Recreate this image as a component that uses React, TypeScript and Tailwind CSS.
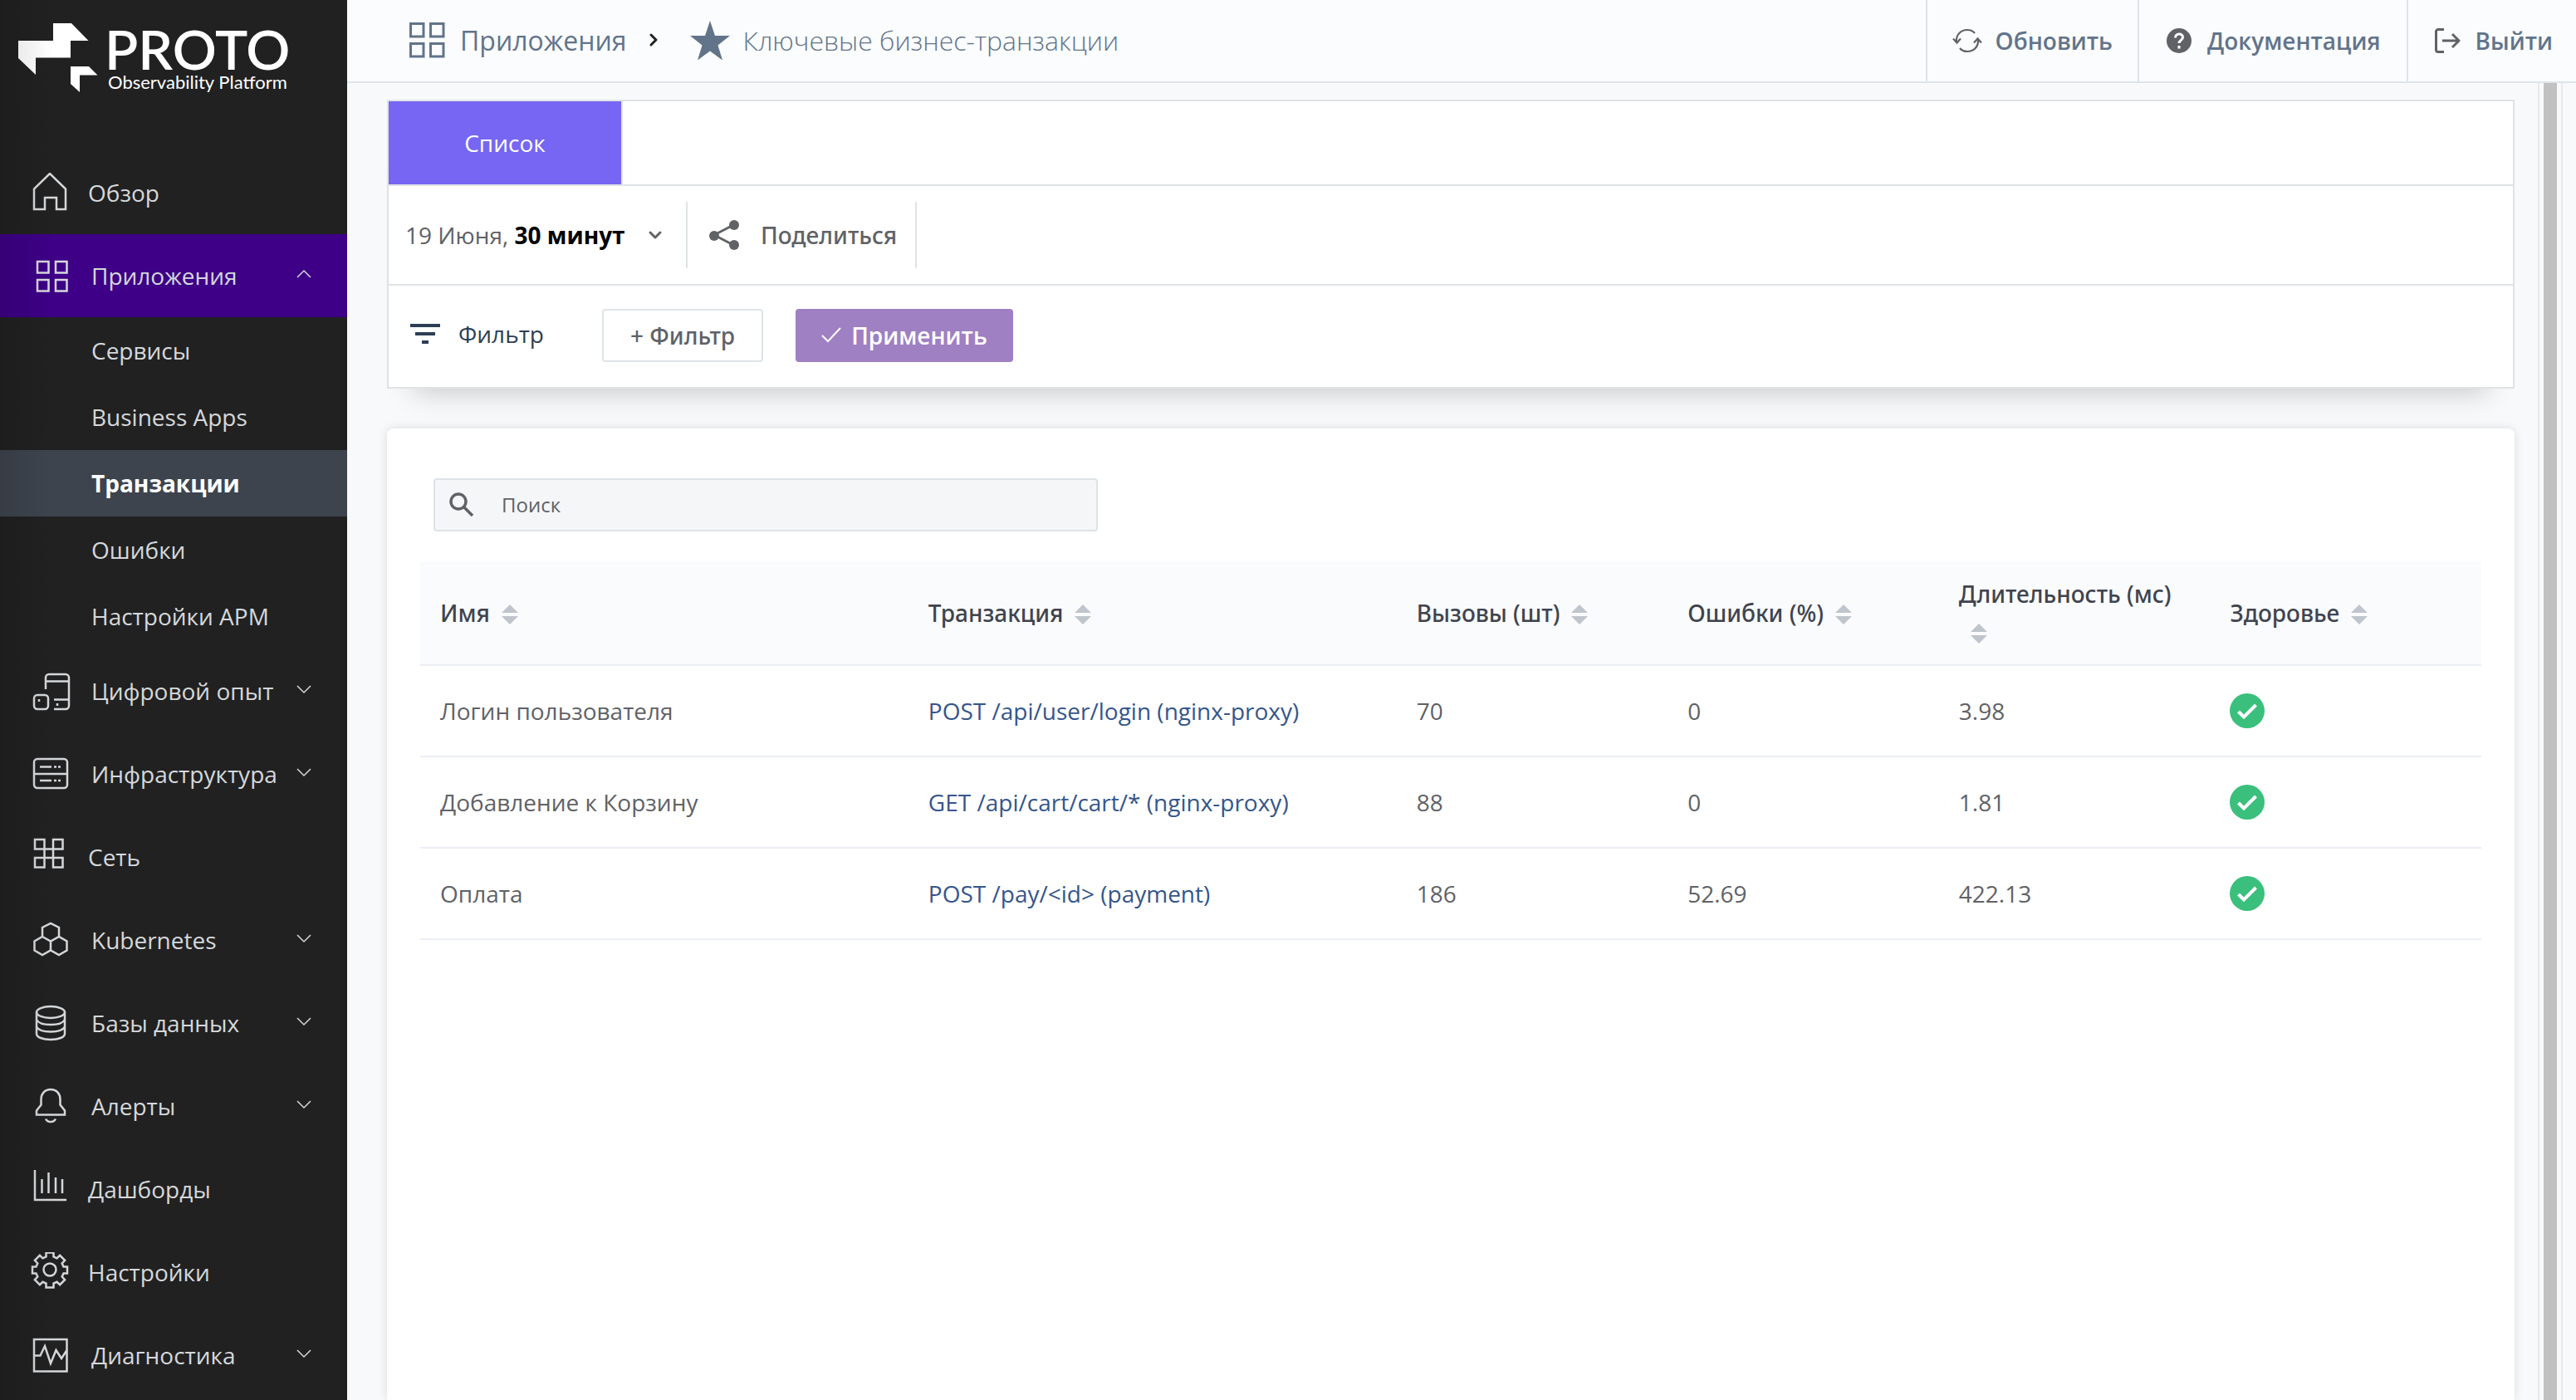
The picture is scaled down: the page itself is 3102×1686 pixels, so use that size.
import type { ReactNode } from 'react';

type NavItem = {
  label: string;
  icon: ReactNode;
  expandable?: boolean;
  open?: boolean;
  children?: string[];
};

const navItems: NavItem[] = [
  {
    label: 'Обзор',
    icon: <path d="M4 44V19.5L23 1l19 18.5V44H31V30H17v14z" />,
  },
  {
    label: 'Приложения',
    expandable: true,
    open: true,
    icon: (
      <path d="M8 7h13.5v13.5H8zM30 7h13.5v13.5H30zM8 29h13.5v13.5H8zM30 29h13.5v13.5H30z" />
    ),
    children: [
      'Сервисы',
      'Business Apps',
      'Транзакции',
      'Ошибки',
      'Настройки АРМ',
    ],
  },
  {
    label: 'Цифровой опыт',
    expandable: true,
    icon: (
      <>
        <path d="M18 22V8a4 4 0 0 1 4-4h20a4 4 0 0 1 4 4v34a4 4 0 0 1-4 4H28M18 12.5h28M28 34.5h18" />
        <rect x="4" y="29" width="17" height="17" rx="4" />
        <path d="M10 34v3M32 39v3" />
      </>
    ),
  },
  {
    label: 'Инфраструктура',
    expandable: true,
    icon: (
      <>
        <rect x="4" y="6" width="40" height="35" rx="4" />
        <path d="M4 24h40M11 15.5h14M28 15.5h3M33 15.5h3M11 32h14M28 32h3M33 32h3" />
      </>
    ),
  },
  {
    label: 'Сеть',
    icon: (
      <path d="M5 3h11.5v11.5H5zM27 3h11.5v11.5H27zM5 25h11.5v11.5H5zM27 25h11.5v11.5H27zM16.5 14.5H27V25H16.5z" />
    ),
  },
  {
    label: 'Kubernetes',
    expandable: true,
    icon: (
      <path d="M14 20V9l10-5 10 5v11M14 20l10 5.5L34 20l9.5 5.5v11L34 42l-10-5.5L14 42l-9.5-5.5v-11zM24 25.5v11" />
    ),
  },
  {
    label: 'Базы данных',
    expandable: true,
    icon: (
      <>
        <ellipse cx="24" cy="11" rx="17" ry="7" />
        <path d="M7 11v26c0 4 7.5 7 17 7s17-3 17-7V11M7 20c2 4 9 6 17 6s15-2 17-6M7 28.5c2 4 9 6 17 6s15-2 17-6" />
      </>
    ),
  },
  {
    label: 'Алерты',
    expandable: true,
    icon: (
      <path d="M7 34.5v-5l5.5-7V16c0-7 4.5-12 11.5-12s11.5 5 11.5 12v6.5l5.5 7v5zM18 39.5c1 2 3 3.5 6 3.5s5-1.5 6-3.5" />
    ),
  },
  {
    label: 'Дашборды',
    icon: <path d="M5 1v36h38M13.5 12v17M21.5 4v25M30 10v19M38 12v17" />,
  },
  {
    label: 'Настройки',
    icon: (
      <>
        <circle cx="23" cy="21" r="7.5" />
        <path d="M18.5 0.5h9v5l4 1.8 3.6-3.5 6 6-3.4 3.7 1.8 4h4.5v8h-4.5l-1.8 4 3.4 3.7-6 6-3.6-3.4-4 1.7v5h-9v-5l-4-1.7-3.6 3.4-6-6 3.4-3.7-1.8-4H2v-8h4.5l1.8-4-3.4-3.7 6-6 3.6 3.5 4-1.8z" />
      </>
    ),
  },
  {
    label: 'Диагностика',
    expandable: true,
    icon: (
      <path d="M4 5h39.5v38.5H4zM4 24.5h7.5L17 13l7 21 6.5-16 6.5 10 6.5-10" />
    ),
  },
];

const columns = [
  'Имя',
  'Транзакция',
  'Вызовы (шт)',
  'Ошибки (%)',
  'Длительность (мс)',
  'Здоровье',
];

const rows = [
  {
    name: 'Логин пользователя',
    transaction: 'POST /api/user/login (nginx-proxy)',
    calls: '70',
    errors: '0',
    duration: '3.98',
  },
  {
    name: 'Добавление к Корзину',
    transaction: 'GET /api/cart/cart/* (nginx-proxy)',
    calls: '88',
    errors: '0',
    duration: '1.81',
  },
  {
    name: 'Оплата',
    transaction: 'POST /pay/<id> (payment)',
    calls: '186',
    errors: '52.69',
    duration: '422.13',
  },
];

function Logo() {
  return (
    <a href="#" className="flex h-[182px] items-start gap-2 pt-7 pl-[22px] text-white">
      <svg className="h-[84px] w-24" viewBox="0 0 96 84" fill="currentColor">
        <path d="M0 21h42V0h22l20.5 21H63v20.5H21V62L0 42z" />
        <path d="M63 52h22l10.5 10.5H74V83L63 73z" />
      </svg>
      <span className="flex flex-col font-[Lato,sans-serif]">
        <span className="text-[66px] leading-[62px] font-semibold">PROTO</span>
        <span className="pl-1 text-[22px] leading-[18px]">
          Observability Platform
        </span>
      </span>
    </a>
  );
}

function NavRow({ item }: { item: NavItem }) {
  return (
    <li>
      <a
        href="#"
        className={
          item.open
            ? 'flex h-[100px] items-center bg-[#3d0086] pr-10 pl-[37px]'
            : 'flex h-[100px] items-center pr-10 pl-[37px]'
        }
      >
        <svg
          className="size-12 shrink-0"
          viewBox="0 0 48 48"
          fill="none"
          stroke="currentColor"
          strokeWidth="2.5"
        >
          {item.icon}
        </svg>
        <span className={item.expandable ? 'ml-[25px] flex-1' : 'ml-[21px] flex-1'}>
          {item.label}
        </span>
        {item.expandable && (
          <svg
            className="size-6 shrink-0"
            viewBox="0 0 24 24"
            fill="none"
            stroke="currentColor"
            strokeWidth="1.5"
          >
            <path d={item.open ? 'M4 14l8-8 8 8' : 'M4 6l8 8 8-8'} />
          </svg>
        )}
      </a>
      {item.children && (
        <ul>
          {item.children.map((child) => (
            <li key={child}>
              <a
                href="#"
                className={
                  child === 'Транзакции'
                    ? 'flex h-20 items-center bg-[#3e444e] pl-[110px] font-bold text-white'
                    : 'flex h-20 items-center pl-[110px]'
                }
              >
                {child}
              </a>
            </li>
          ))}
        </ul>
      )}
    </li>
  );
}

function Sidebar() {
  return (
    <aside className="relative w-[418px] shrink-0 bg-[#212121] text-[#d5d8db]">
      <Logo />
      <nav>
        <ul>
          {navItems.map((item) => (
            <NavRow key={item.label} item={item} />
          ))}
        </ul>
      </nav>
      <div className="pointer-events-none absolute inset-y-0 left-0 w-16 bg-linear-to-r from-black/12 to-transparent" />
    </aside>
  );
}

function Header() {
  return (
    <header className="flex h-[100px] justify-between border-b-2 border-[#dde4ea] bg-[#fbfcfe] text-[#62748a]">
      <nav className="flex items-center pl-[74px] text-[32px]">
        <a href="#" className="flex items-center gap-[18px]">
          <svg
            className="size-11"
            viewBox="0 0 44 44"
            fill="none"
            stroke="currentColor"
            strokeWidth="3"
          >
            <path d="M2.5 1.5H18V17H2.5zM26.5 1.5H42V17H26.5zM2.5 25.5H18V41H2.5zM26.5 25.5H42V41H26.5z" />
          </svg>
          Приложения
        </a>
        <svg
          className="mx-5 size-6"
          viewBox="0 0 24 24"
          fill="none"
          stroke="#222222"
          strokeWidth="3"
          strokeLinecap="round"
          strokeLinejoin="round"
        >
          <path d="M9 5l6 6-6 6" />
        </svg>
        <span className="flex items-center gap-4 font-light">
          <svg className="ml-3 size-12" viewBox="0 0 48 48" fill="currentColor">
            <path d="M24 0l6 18h18L33.5 29.5 39 47.5 24 36.5 9 47.5l5.5-18L0 18h18z" />
          </svg>
          Ключевые бизнес-транзакции
        </span>
      </nav>
      <div className="flex text-[28px] font-semibold">
        <button className="flex items-center gap-4 border-l-2 border-[#dfe3e6] px-[30px]">
          <svg
            className="size-9"
            viewBox="0 0 36 36"
            fill="none"
            stroke="#606266"
            strokeWidth="2.2"
          >
            <path d="M5 20C4 10 11 5 18 5c4 0 7 1.5 9 4M1 15.5l4.5 5 4.5-5M31 16c1 10-6 15-13 15-4 0-7-1.5-9-4M26 20.5l4.5-5 4.5 5" />
          </svg>
          Обновить
        </button>
        <a
          href="#"
          className="flex items-center gap-[18px] border-l-2 border-[#dfe3e6] pr-[31px] pl-8"
        >
          <svg className="size-8" viewBox="0 0 32 32" fill="none">
            <circle cx="16" cy="16" r="15" fill="#606266" />
            <path
              d="M11.5 12.5c0-6 9-6 9-.5 0 3.5-4.5 3.5-4.5 7M16 22v3.5"
              stroke="white"
              strokeWidth="3"
            />
          </svg>
          Документация
        </a>
        <button className="flex items-center gap-[18px] border-l-2 border-[#dfe3e6] pr-7 pl-[31px]">
          <svg
            className="size-8"
            viewBox="0 0 32 32"
            fill="none"
            stroke="#606266"
            strokeWidth="3"
            strokeLinejoin="round"
          >
            <path d="M12 2.5H5a2.5 2.5 0 0 0-2.5 2.5v22A2.5 2.5 0 0 0 5 29.5h7M10 16h20M22 8l8 8-8 8" />
          </svg>
          Выйти
        </button>
      </div>
    </header>
  );
}

function Toolbar() {
  return (
    <section className="border-2 border-[#dfe3e6] bg-white shadow-[0_36px_32px_-32px_rgba(0,0,0,0.2)]">
      <div className="flex border-b-2 border-[#dfe3e6]">
        <button className="h-[100px] w-[282px] border-r-2 border-[#dfe3e6] bg-[#7666f3] text-white">
          Список
        </button>
      </div>
      <div className="flex h-[120px] items-center border-b-2 border-[#dfe3e6]">
        <button className="flex h-20 w-[360px] items-center border-r-2 border-[#dfe3e6] pl-5">
          <span>
            19 Июня, <b className="text-black">30 минут</b>
          </span>
          <svg
            className="ml-6 size-6"
            viewBox="0 0 24 24"
            fill="none"
            stroke="currentColor"
            strokeWidth="3"
            strokeLinecap="round"
            strokeLinejoin="round"
          >
            <path d="M6 9l6 6 6-6" />
          </svg>
        </button>
        <button className="flex h-20 w-[276px] items-center gap-6 border-r-2 border-[#dfe3e6] pl-6 font-['Noto_Sans',sans-serif] font-medium">
          <svg
            className="size-10"
            viewBox="0 0 40 40"
            fill="currentColor"
            stroke="currentColor"
            strokeWidth="3"
          >
            <path d="M8 20L31 8M8 20l23 12" />
            <g stroke="none">
              <circle cx="8" cy="21" r="6" />
              <circle cx="32" cy="8" r="6" />
              <circle cx="32" cy="32" r="6" />
            </g>
          </svg>
          Поделиться
        </button>
      </div>
      <div className="flex h-[122px] items-center pb-0.5 pl-6">
        <span className="mb-1 flex items-center gap-5 text-[#2d3f54]">
          <svg className="size-10" viewBox="0 0 40 40" fill="currentColor">
            <path d="M2 8h36v4H2zM8 18h24v4H8zM16 28h8v4h-8z" />
          </svg>
          Фильтр
        </span>
        <button className="ml-[70px] h-16 w-[194px] rounded border-2 border-[#dde3e8] font-['Noto_Sans',sans-serif] font-medium">
          + Фильтр
        </button>
        <button className="ml-[39px] flex h-16 w-[262px] items-center justify-center gap-3 rounded bg-[#9f80c2] font-semibold text-white">
          <svg
            className="h-5 w-6"
            viewBox="0 0 24 20"
            fill="none"
            stroke="currentColor"
            strokeWidth="2"
          >
            <path d="M1 10l7 7L23 1" />
          </svg>
          Применить
        </button>
      </div>
    </section>
  );
}

function SortIcon() {
  return (
    <span className="inline-flex h-6 w-12 justify-center align-[-3px]">
      <svg className="h-6 w-5" viewBox="0 0 20 24" fill="#c0c4cc">
        <path d="M10 0l10 10H0zM10 24L0 14h20z" />
      </svg>
    </span>
  );
}

function TransactionsTable() {
  return (
    <table className="w-full table-fixed text-left">
      <colgroup>
        <col className="w-9/38" />
        <col className="w-9/38" />
        <col className="w-5/38" />
        <col className="w-5/38" />
        <col className="w-5/38" />
        <col className="w-5/38" />
      </colgroup>
      <thead>
        <tr className="border-b-2 border-[#ebeef5] bg-[#fafbfd] text-[#40444e]">
          {columns.map((column) => (
            <th
              key={column}
              className="px-6 py-4 font-['Noto_Sans',sans-serif] leading-[46px] font-medium"
            >
              {column}
              <SortIcon />
            </th>
          ))}
        </tr>
      </thead>
      <tbody>
        {rows.map((row) => (
          <tr key={row.name} className="h-[110px] border-b-2 border-[#ebeef5]">
            <td className="px-6">{row.name}</td>
            <td className="px-6">
              <a href="#" className="text-[#35568b]">
                {row.transaction}
              </a>
            </td>
            <td className="px-6">{row.calls}</td>
            <td className="px-6">{row.errors}</td>
            <td className="px-6">{row.duration}</td>
            <td className="px-6">
              <svg className="size-[42px]" viewBox="0 0 42 42" fill="none">
                <circle cx="21" cy="21" r="21" fill="#3ac07c" />
                <path d="M10.5 22l6.5 6.5L31.5 14" stroke="white" strokeWidth="4" />
              </svg>
            </td>
          </tr>
        ))}
      </tbody>
    </table>
  );
}

export default function App() {
  return (
    <div className="flex min-h-screen bg-[#f8f9fb] font-['Open_Sans','Noto_Sans',sans-serif] text-[28px] leading-[38px] text-[#606266]">
      <Sidebar />
      <div className="flex min-w-0 flex-1 flex-col">
        <Header />
        <div className="flex flex-1 pr-4">
          <main className="flex min-w-0 flex-1 flex-col pt-5 pr-7 pl-12">
            <Toolbar />
            <section className="mt-12 flex-1 rounded-t-lg bg-white px-10 pt-[60px] shadow-[0_0_12px_rgba(0,0,0,0.12)]">
              <label className="mb-9 ml-4 flex h-16 w-[800px] items-center gap-8 rounded border-2 border-[#dde3e8] bg-[#f5f6f8] pl-4">
                <svg
                  className="size-8"
                  viewBox="0 0 32 32"
                  fill="none"
                  stroke="currentColor"
                  strokeWidth="3.5"
                >
                  <circle cx="12" cy="12" r="9" />
                  <path d="M18.5 18.5L29 29" />
                </svg>
                <input
                  type="text"
                  placeholder="Поиск"
                  aria-label="Поиск"
                  className="flex-1 bg-transparent text-2xl outline-none placeholder:text-[#606266]"
                />
              </label>
              <TransactionsTable />
            </section>
          </main>
          <div className="flex w-[30px] justify-center border-x-2 border-[#e8e8e8] bg-[#fafafa]">
            <div className="w-4 bg-[#c1c1c1]" />
          </div>
        </div>
      </div>
    </div>
  );
}
